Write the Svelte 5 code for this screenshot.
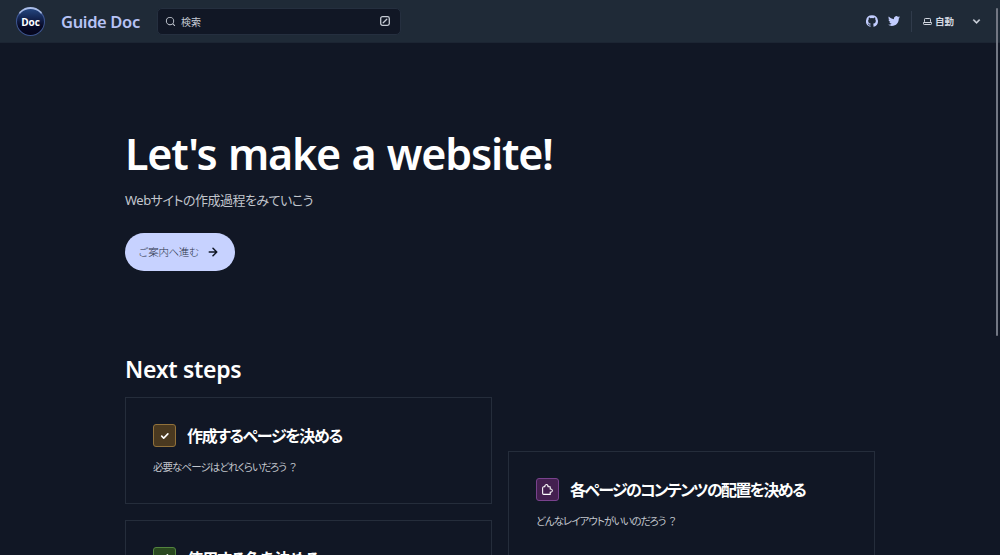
<script>
  const paths = {
    search: 'M21.71 20.29 18 16.61A9 9 0 1 0 16.61 18l3.68 3.68a.999.999 0 0 0 1.42 0 1 1 0 0 0 0-1.39ZM11 18a7 7 0 1 1 0-14 7 7 0 0 1 0 14Z',
    arrow: 'M17.92 11.62a1.001 1.001 0 0 0-.21-.33l-5-5a1.003 1.003 0 1 0-1.42 1.42l3.3 3.29H7a1 1 0 0 0 0 2h7.59l-3.3 3.29a1.002 1.002 0 0 0 .325 1.639 1 1 0 0 0 1.095-.219l5-5a1 1 0 0 0 .21-.33 1 1 0 0 0 0-.76Z',
    caret: 'M17 9.17a1 1 0 0 0-1.41 0L12 12.71 8.46 9.17a1 1 0 1 0-1.41 1.42l4.24 4.24a1.002 1.002 0 0 0 1.42 0L17 10.59a1.002 1.002 0 0 0 0-1.42Z',
    check: 'M14.72 8.79l-4.29 4.3-1.65-1.65a1 1 0 1 0-1.41 1.41l2.35 2.36a1 1 0 0 0 1.41 0l5-5a1 1 0 1 0-1.41-1.42z',
    puzzle: 'M17 22H5a3 3 0 0 1-3-3V9a3 3 0 0 1 3-3h1a4 4 0 0 1 7.3-2.18c.448.64.692 1.4.7 2.18h3a1 1 0 0 1 1 1v3a4 4 0 0 1 2.18 7.3A3.86 3.86 0 0 1 18 18v3a1 1 0 0 1-1 1ZM5 8a1 1 0 0 0-1 1v10a1 1 0 0 0 1 1h11v-3.18a1 1 0 0 1 1.33-.95 1.77 1.77 0 0 0 1.74-.23 2 2 0 0 0 .93-1.37 2 2 0 0 0-.48-1.59 1.89 1.89 0 0 0-2.17-.55 1 1 0 0 1-1.33-.95V8h-3.2a1 1 0 0 1-1-1.33 1.77 1.77 0 0 0-.23-1.74 2 2 0 0 0-3-.43A2 2 0 0 0 8 6c.002.23.046.456.13.67A1 1 0 0 1 7.18 8H5Z',
    pencil: 'M22 7.24a1 1 0 0 0-.29-.71l-4.24-4.24a1 1 0 0 0-1.1-.22 1 1 0 0 0-.32.22l-2.83 2.83L2.29 16.05a1 1 0 0 0-.29.71V21a1 1 0 0 0 1 1h4.24a1 1 0 0 0 .76-.29l10.87-10.93L21.71 8c.1-.1.17-.2.22-.33a1 1 0 0 0 0-.24v-.14l.07-.05ZM6.83 20H4v-2.83l9.93-9.93 2.83 2.83L6.83 20ZM18.17 8.66l-2.83-2.83 1.42-1.41 2.82 2.82-1.41 1.42Z',
    github: 'M12 .3a12 12 0 0 0-3.8 23.38c.6.12.83-.26.83-.57L9 21.07c-3.34.72-4.04-1.61-4.04-1.61-.55-1.39-1.34-1.76-1.34-1.76-1.08-.74.09-.73.09-.73 1.2.09 1.83 1.24 1.83 1.24 1.08 1.83 2.81 1.3 3.5 1 .1-.78.42-1.31.76-1.61-2.67-.3-5.47-1.33-5.47-5.93 0-1.31.47-2.38 1.24-3.22-.14-.3-.54-1.52.1-3.18 0 0 1-.32 3.3 1.23a11.5 11.5 0 0 1 6 0c2.28-1.55 3.29-1.23 3.29-1.23.64 1.66.24 2.88.12 3.18a4.65 4.65 0 0 1 1.23 3.22c0 4.61-2.8 5.63-5.48 5.92.42.36.81 1.1.81 2.22l-.01 3.29c0 .31.2.69.82.57A12 12 0 0 0 12 .3Z',
    twitter: 'M23.953 4.57a10 10 0 0 1-2.825.775 4.958 4.958 0 0 0 2.163-2.723c-.951.555-2.005.959-3.127 1.184a4.92 4.92 0 0 0-8.384 4.482C7.69 8.095 4.067 6.13 1.64 3.162a4.822 4.822 0 0 0-.666 2.475c0 1.71.87 3.213 2.188 4.096a4.904 4.904 0 0 1-2.228-.616v.06a4.923 4.923 0 0 0 3.946 4.827 4.996 4.996 0 0 1-2.212.085 4.936 4.936 0 0 0 4.604 3.417 9.867 9.867 0 0 1-6.102 2.105c-.39 0-.779-.023-1.17-.067a13.995 13.995 0 0 0 7.557 2.209c9.053 0 13.998-7.496 13.998-13.985 0-.21 0-.42-.015-.63A9.935 9.935 0 0 0 24 4.59z'
  };
  const cards = [
    { title: '作成するページを決める', body: '必要なページはどれくらいだろう', icon: 'check', size: 20, tone: 'orange' },
    { title: '各ページのコンテンツの配置を決める', body: 'どんなレイアウトがいいのだろう', icon: 'puzzle', size: 13, tone: 'purple' },
    { title: '使用する色を決める', body: 'どんな色がいいのだろう', icon: 'pencil', size: 12, tone: 'green' }
  ];
</script>

{#snippet icon(name, size)}
  <svg width={size} height={size} viewBox="0 0 24 24" fill="currentColor" aria-hidden="true"><path d={paths[name]} /></svg>
{/snippet}

{#snippet card(c)}
  <article class="card {c.tone}">
    <h3><span class="badge">{@render icon(c.icon, c.size)}</span><span class="label">{c.title}</span></h3>
    <p>{c.body}<span class="mark">？</span></p>
  </article>
{/snippet}

<div class="page">
  <header>
    <div class="logo"><span>Doc</span></div>
    <span class="site">Guide Doc</span>
    <div class="search">
      {@render icon('search', 11)}
      <span>検索</span>
      <svg class="key" width="10" height="10" viewBox="0 0 10 10" fill="none" stroke="currentColor" aria-hidden="true">
        <rect x=".7" y=".7" width="8.6" height="8.6" rx="1.8" stroke-width="1.3" /><path d="M3.2 6.8l3.6-3.6" stroke-width="1.3" stroke-linecap="round" />
      </svg>
    </div>
    <div class="social">{@render icon('github', 12)}{@render icon('twitter', 12)}</div>
    <div class="theme">
      <svg width="9" height="9" viewBox="0 0 9 9" fill="none" stroke="currentColor" aria-hidden="true">
        <rect x="1.5" y="1.5" width="6" height="4" rx=".8" /><path d="M.5 5.5v1.2q0 .8.8.8h6.4q.8 0 .8-.8V5.5z" />
      </svg>
      <span>自動</span>{@render icon('caret', 15)}
    </div>
  </header>

  <main>
    <section class="hero">
      <h1>Let's make a website!</h1>
      <p>Webサイトの作成過程をみていこう</p>
      <div class="action"><span>ご案内へ進む</span>{@render icon('arrow', 18)}</div>
    </section>
    <h2>Next steps</h2>
    <div class="grid">
      <div class="col">{@render card(cards[0])}{@render card(cards[2])}</div>
      <div class="col second">{@render card(cards[1])}</div>
    </div>
  </main>
  <div class="thumb"></div>
</div>

<style>
  :global(body) { background: #111725; overflow: hidden; }
  .page { position: relative; height: 555px; overflow: hidden; background: #111725; color: #fff; font-family: 'Noto Sans', 'Noto Sans CJK JP', sans-serif; }
  svg { display: block; flex: none; }
  h1, h2, h3, p { margin: 0; white-space: nowrap; }
  header { box-sizing: border-box; display: flex; align-items: center; height: 43px; padding: 0 16px 0 16px; background: #1f2a37; border-bottom: 1px solid #1c2533; }
  .logo { box-sizing: border-box; width: 29px; height: 29px; border-radius: 50%; border: 1px solid #3d5590; border-top: 2px solid #a9bce8; background: linear-gradient(#24457e 0, #142653 35%, #080b27 65%, #05051b); display: flex; align-items: center; justify-content: center; font: 700 10px/1 'Open Sans', sans-serif; }
  .site { margin-left: 16px; padding-top: 2px; color: #b7c3f5; font-size: 16.5px; font-weight: 600; letter-spacing: -.35px; line-height: 24px; width: 96px; white-space: nowrap; }
  .search { box-sizing: border-box; display: flex; align-items: center; width: 244px; height: 27px; padding: 0 10px 0 7px; background: #111725; border: 1px solid #252f3f; border-radius: 5px; color: #c5cad3; font-size: 10px; }
  .search span { margin-left: 5px; }
  .key { margin-left: auto; }
  .social { display: flex; gap: 10px; margin-left: auto; color: #c3ceff; padding-right: 11px; }
  .theme { display: flex; align-items: center; height: 21px; border-left: 1px solid #303b4b; padding-left: 11px; color: #d3d8e1; font-size: 9.5px; font-weight: 700; }
  .theme span { margin: 0 15px 0 3px; }
  .theme svg:last-child { stroke: currentColor; stroke-width: .8; }
  main { width: 750px; margin: 0 auto; }
  .hero { display: flex; flex-direction: column; align-items: flex-start; height: 310px; box-sizing: border-box; padding-top: 83px; }
  h1 { font-size: 43px; line-height: 56px; font-weight: 600; letter-spacing: -1.2px; word-spacing: 1.4px; }
  .hero p { font-size: 13px; line-height: 20px; color: #c2c6cd; margin-top: 8px; letter-spacing: -.5px; font-feature-settings: 'palt'; }
  .action { display: flex; align-items: center; box-sizing: border-box; width: 110px; height: 38px; margin-top: 23px; padding-left: 13px; gap: 5px; border-radius: 19px; background: #c7d2ff; color: #111725; }
  .action span { font-size: 10.5px; letter-spacing: -.3px; line-height: 15px; color: #2b3349; font-weight: 300; white-space: nowrap; }
  h2 { font-size: 23px; line-height: 32px; font-weight: 600; letter-spacing: -.3px; }
  .grid { display: grid; grid-template-columns: 1fr 1fr; gap: 16px; margin-top: 12px; }
  .col { display: flex; flex-direction: column; gap: 16px; }
  .second { padding-top: 54px; }
  .card { box-sizing: border-box; height: 107px; border: 1px solid #252d3b; padding: 26px 27px; }
  h3 { display: flex; align-items: center; gap: 11px; height: 23px; font-size: 16px; font-weight: 600; }
  .label { font-feature-settings: 'palt'; letter-spacing: -1.35px; padding-bottom: 2px; }
  .purple .label { letter-spacing: -1.65px; }
  .green .label { letter-spacing: -.8px; }
  .badge { box-sizing: border-box; display: flex; align-items: center; justify-content: center; width: 23px; height: 23px; border: 1px solid; border-radius: 3px; }
  .badge svg { color: #fff; }
  .orange .badge { background: #4a3920; border-color: #91713b; }
  .purple .badge { background: #43204f; border-color: #79428d; }
  .green .badge { background: #29481f; border-color: #53843e; }
  .card p { font-size: 10.5px; line-height: 18px; margin-top: 11px; color: #c2c6cd; letter-spacing: -.95px; font-feature-settings: 'palt'; }
  .mark { margin-left: 3px; }
  .thumb { position: absolute; right: 2px; top: 8px; width: 2px; height: 328px; background: #727783; border-radius: 1px; }
</style>
